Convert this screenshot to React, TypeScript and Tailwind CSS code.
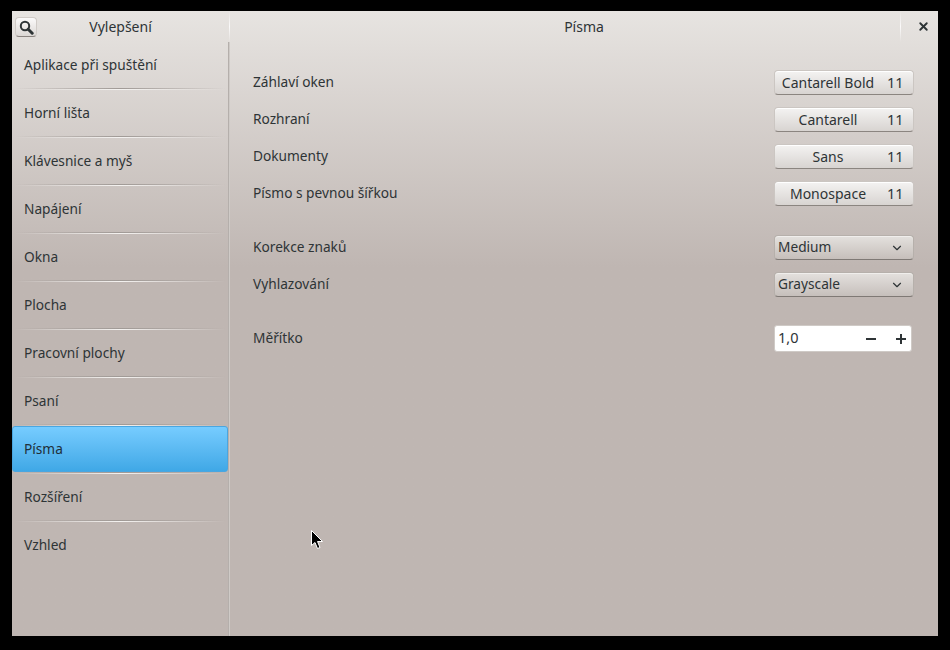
import React from 'react';
import { ChevronDown, X } from 'lucide-react';

const tweaks = [
    'Aplikace při spuštění',
    'Horní lišta',
    'Klávesnice a myš',
    'Napájení',
    'Okna',
    'Plocha',
    'Pracovní plochy',
    'Psaní',
    'Písma',
    'Rozšíření',
    'Vzhled',
];

const fontRows = [
    { label: 'Záhlaví oken', font: 'Cantarell Bold' },
    { label: 'Rozhraní', font: 'Cantarell' },
    { label: 'Dokumenty', font: 'Sans' },
    { label: 'Písmo s pevnou šířkou', font: 'Monospace' },
];

const buttonClass =
    'w-[140px] h-[25px] flex items-center rounded-[4px] border border-[#cbc6c2] border-b-[#8b8580] bg-gradient-to-b from-[#f4f3f2] to-[#d8d4d1] shadow-[inset_0_1px_0_#ffffff]';

const comboClass =
    'w-[140px] h-[25px] flex items-center rounded-[4px] border border-[#b6b0ab] border-b-[#7f7975] bg-gradient-to-b from-[#e4e1de] to-[#c6bfbb] shadow-[inset_0_1px_0_#f0eeec]';

const SidebarRow = ({ name, isLast }: { name: string; isLast: boolean }) => {
    const selected = name === 'Písma';
    return (
        <div>
            <div
                className={`h-[46px] flex items-center ${
                    selected
                        ? 'pl-[11px] bg-gradient-to-b from-[#76ccff] to-[#3fa8e6] rounded-[3px] border border-[#4aa6e0] text-[#1f2f3a]'
                        : 'pl-[12px]'
                }`}
            >
                {name}
            </div>
            {!isLast && (
                <div className="mx-[3px]">
                    <div className="h-px bg-gradient-to-r from-transparent via-[#a09a96] to-transparent" />
                    <div className="h-px bg-gradient-to-r from-transparent via-[#f4f2f0] to-transparent" />
                </div>
            )}
        </div>
    );
};

const SettingRow = ({ label, children }: { label: string; children: React.ReactNode }) => (
    <div className="flex items-center justify-between">
        <span>{label}</span>
        {children}
    </div>
);

export default function App() {
    return (
        <div className="relative w-[950px] h-[650px] bg-black pl-[12px] pr-[12px] pt-[11px] pb-[14px] font-['Noto_Sans',sans-serif] text-[13.7px] text-[#2e3436] overflow-hidden">
            <div className="w-[926px] h-[625px] flex flex-col bg-gradient-to-b from-[#e7e4e1] to-[#bfb6b2] to-[41%] bg-[#bfb6b2]">
                {/* Title bar */}
                <div className="h-[31px] flex items-center shrink-0 text-[14px]">
                    <div className="w-[217px] h-full relative flex items-center justify-center">
                        <button className="absolute left-[3px] top-[6px] w-[22px] h-[20px] flex items-center justify-center rounded-[4px] border border-[#d0cbc7] border-b-[#8a8480] bg-gradient-to-b from-[#fbfafa] to-[#dcd8d5]">
                            <svg width="15" height="15" viewBox="0 0 15 15" fill="none" stroke="#2e3436">
                                <circle cx="6" cy="6" r="4.2" strokeWidth="2" />
                                <path d="M9.2 9.2 L13.2 13.2" strokeWidth="3" strokeLinecap="round" />
                            </svg>
                        </button>
                        <span>Vylepšení</span>
                    </div>
                    <div className="w-px h-full bg-gradient-to-b from-transparent via-[#fbfafa] to-transparent" />
                    <div className="flex-1 h-full flex items-center justify-center pl-[38px]">
                        <span>Písma</span>
                    </div>
                    <div className="w-px h-full bg-gradient-to-b from-transparent via-[#fbfafa] to-transparent" />
                    <div className="w-[37px] h-full flex items-center justify-center pl-[7px]">
                        <X size={13} strokeWidth={3.5} className="text-[#2e3436]" />
                    </div>
                </div>

                <div className="flex-1 flex min-h-0">
                    {/* Sidebar */}
                    <div className="w-[216px] shrink-0">
                        {tweaks.map((name, i) => (
                            <SidebarRow key={name} name={name} isLast={i === tweaks.length - 1} />
                        ))}
                    </div>
                    <div className="w-[2px] shrink-0 bg-gradient-to-r from-[#a8a29e] to-[#dcd8d5]" />

                    {/* Settings */}
                    <div className="flex-1 pl-[23px] pr-[24px] pt-[28px] flex flex-col">
                        <div className="flex flex-col gap-[12px]">
                            {fontRows.map(row => (
                                <SettingRow key={row.label} label={row.label}>
                                    <button className={buttonClass}>
                                        <span className="flex-1 text-center text-[14px]">{row.font}</span>
                                        <span className="w-[32px] text-left pl-[6px] text-[14.5px]">11</span>
                                    </button>
                                </SettingRow>
                            ))}
                        </div>
                        <div className="flex flex-col gap-[12px] mt-[29px]">
                            <SettingRow label="Korekce znaků">
                                <button className={`${comboClass} pl-[3px] pr-[9px] justify-between`}>
                                    <span>Medium</span>
                                    <ChevronDown size={14} strokeWidth={2} />
                                </button>
                            </SettingRow>
                            <SettingRow label="Vyhlazování">
                                <button className={`${comboClass} pl-[3px] pr-[9px] justify-between`}>
                                    <span>Grayscale</span>
                                    <ChevronDown size={14} strokeWidth={2} />
                                </button>
                            </SettingRow>
                        </div>
                        <div className="mt-[28px]">
                            <SettingRow label="Měřítko">
                                <div className="w-[138px] h-[27px] mr-[2px] flex items-center rounded-[3px] border border-[#cfcac6] bg-white pl-[3px]">
                                    <span className="flex-1 pb-[2px] text-[14.5px]">1,0</span>
                                    <svg width="30" height="12" viewBox="0 0 30 12" stroke="#2e3436" strokeWidth="2">
                                        <path d="M10 6 H20" />
                                    </svg>
                                    <svg width="30" height="12" viewBox="0 0 30 12" className="-mr-[5px]" stroke="#2e3436" strokeWidth="2">
                                        <path d="M10 6 H20 M15 1 V11" />
                                    </svg>
                                </div>
                            </SettingRow>
                        </div>
                    </div>
                </div>
            </div>

            {/* Mouse pointer */}
            <svg className="absolute left-[311px] top-[530px]" width="13" height="20" viewBox="0 0 13 20">
                <path d="M0.5 0.5 L0.5 15.5 L4 12.5 L6.5 18.5 L9 17.5 L6.5 11.5 L11.5 11.5 Z" fill="#000" stroke="#fff" strokeWidth="1" />
            </svg>
        </div>
    );
}
